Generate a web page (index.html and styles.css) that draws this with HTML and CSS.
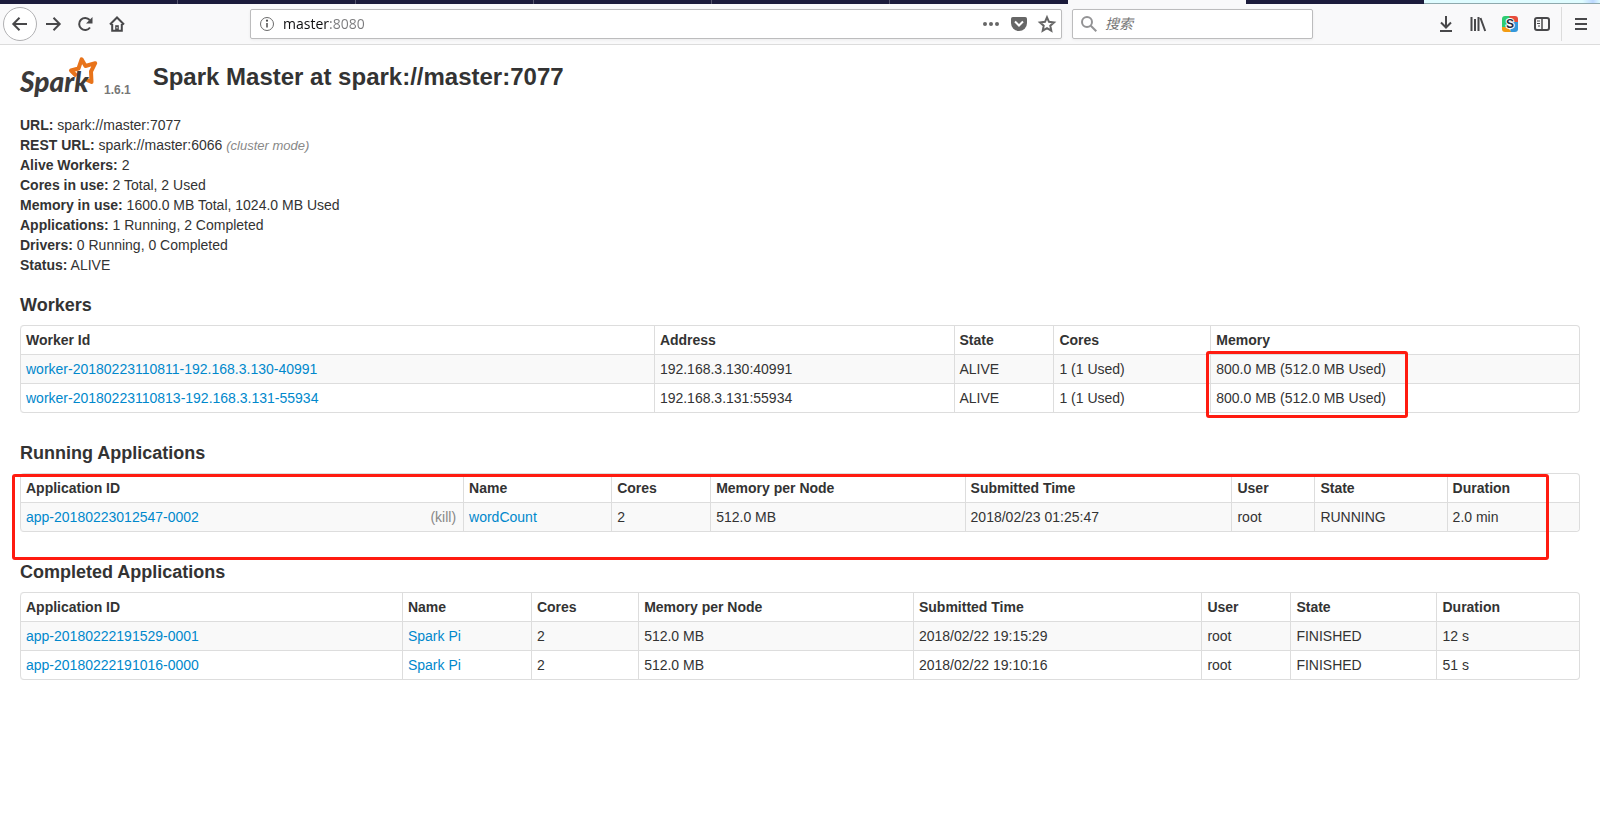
FILE: index.html
```html
<!DOCTYPE html>
<html lang="en">
<head>
<meta charset="utf-8">
<title>Spark Master at spark://master:7077</title>
<link rel="stylesheet" href="styles.css">
</head>
<body>
<div class="tabstrip">
  <span class="tab"></span><span class="tab"></span><span class="tab"></span><span class="tab"></span><span class="tab"></span><span class="tab tab-last"></span><span class="tab tab-active"></span><span class="tab tab-last"></span><span class="tab-space"></span>
</div>
<nav class="toolbar" aria-label="Browser toolbar">
  <div class="nav-buttons">
    <button class="back" type="button" aria-label="Back"><svg class="icon" viewBox="0 0 16 16"><path d="M15 8H2M7.500 1.800 1.300 8l6.200 6.200"/></svg></button>
    <button class="tool" type="button" aria-label="Forward"><svg class="icon" viewBox="0 0 16 16"><path d="M1 8h13M8.500 1.800 14.700 8l-6.200 6.200"/></svg></button>
    <button class="tool" type="button" aria-label="Reload"><svg class="icon" viewBox="0 0 16 16"><path d="M13 11.500A6 6 0 1 1 12.700 4"/><path class="solid" d="M15.500 1v6.500H9z"/></svg></button>
    <button class="tool" type="button" aria-label="Home"><svg class="icon" viewBox="0 0 16 16"><path d="M1 8.500 8 1.500l7 7M3.200 8v6.800h9.600V8"/><path class="solid" d="M6.200 15V9.200h3.600V15z"/><path d="M8 11v1.500" stroke="#f9f9fa" stroke-width="1"/></svg></button>
  </div>
  <div class="field url-field">
    <svg class="icon thin" viewBox="0 0 16 16"><circle cx="8" cy="8" r="6.500"/><path d="M8 7v4.500" stroke-width="1.800"/><circle class="solid" cx="8" cy="4.700" r="1.100"/></svg>
    <input class="url" type="text" value="master:8080" aria-label="Address">
    <button class="inner" type="button" aria-label="Page actions"><svg class="icon grey" viewBox="0 0 16 16"><circle class="dot" cx="2" cy="8" r="2"/><circle class="dot" cx="8" cy="8" r="2"/><circle class="dot" cx="14" cy="8" r="2"/></svg></button>
    <button class="inner" type="button" aria-label="Save to Pocket"><svg class="icon grey" viewBox="0 0 16 16"><path class="dot" d="M1.800 1h12.400Q16 1 16 2.800V7A8 8 0 0 1 0 7V2.800Q0 1 1.800 1z"/><path d="m4 5.500 4 4 4-4" stroke="#fff"/></svg></button>
    <button class="inner" type="button" aria-label="Bookmark"><svg class="icon grey" viewBox="0 0 16 16"><path d="m8 1.300 2 4.500 5 .6-3.700 3.300 1 5L8 12.200l-4.300 2.500 1-5L1 6.400l5-.6z"/></svg></button>
  </div>
  <div class="field search-field">
    <svg class="icon glass" viewBox="0 0 16 16"><circle cx="6" cy="6" r="5"/><path d="m9.800 9.800 5.500 5.500"/></svg>
    <input class="search" type="text" placeholder="搜索" aria-label="搜索">
  </div>
  <div class="tools">
    <button class="tool" type="button" aria-label="Downloads"><svg class="icon" viewBox="0 0 16 16"><path d="M8 0v11M3 6.500l5 5 5-5M2 15h12"/></svg></button>
    <button class="tool" type="button" aria-label="Library"><svg class="icon" viewBox="0 0 16 16"><path d="M1.500 1v14M5 3v12M8.500 1v14M10.500 2l4.700 13" stroke-width="2"/></svg></button>
    <button class="tool" type="button" aria-label="Sogou"><svg class="icon" viewBox="0 0 16 16"><defs><clipPath id="tile"><rect width="16" height="16" rx="3"/></clipPath></defs><g clip-path="url(#tile)" stroke="none"><path fill="#2ecc71" d="M0 0h9v7l-5 4H0z"/><path fill="#e74c3c" d="M7 0h9v6h-6z"/><path fill="#3498db" d="M10 6h6v10H8z"/><path fill="#f39c12" d="M0 11h6l3 5H0z"/></g><text class="badge-letter" x="8" y="12" text-anchor="middle">S</text></svg></button>
    <button class="tool" type="button" aria-label="Sidebars"><svg class="icon" viewBox="0 0 16 16"><rect x="1" y="2" width="14" height="12" rx="2"/><path d="M8 2v12" stroke-width="1.500"/><path d="M3 5h3M3 7.500h3M4 10h2" stroke-width="1"/></svg></button>
    <span class="divider"></span>
    <button class="tool" type="button" aria-label="Menu"><svg class="icon" viewBox="0 0 16 16"><path d="M2 3h12M2 8h12M2 13h12"/></svg></button>
  </div>
</nav>

<main class="page">
  <header class="masthead">
    <a class="brand" href="#" aria-label="Spark">
      <svg class="logo" viewBox="0 0 78 42"><path class="star" d="M56.500 18 51 12.500l7.500-2 3.100-9.200L65.500 8l9.700-2.800L71 13.500 71.500 24l-5.500-2.500"/><text class="wordmark" x="0" y="34">Spark</text></svg>
    </a>
    <span class="version">1.6.1</span>
    <h1 class="title">Spark Master at spark://master:7077</h1>
  </header>

  <ul class="summary">
    <li><strong>URL:</strong> spark://master:7077</li>
    <li><strong>REST URL:</strong> spark://master:6066 <span class="note">(cluster mode)</span></li>
    <li><strong>Alive Workers:</strong> 2</li>
    <li><strong>Cores in use:</strong> 2 Total, 2 Used</li>
    <li><strong>Memory in use:</strong> 1600.0 MB Total, 1024.0 MB Used</li>
    <li><strong>Applications:</strong> 1 Running, 2 Completed</li>
    <li><strong>Drivers:</strong> 0 Running, 0 Completed</li>
    <li><strong>Status:</strong> ALIVE</li>
  </ul>

  <h2 class="heading">Workers</h2>
  <div class="table-box">
    <table class="grid workers">
      <colgroup><col><col><col><col><col></colgroup>
      <thead><tr><th>Worker Id</th><th>Address</th><th>State</th><th>Cores</th><th>Memory</th></tr></thead>
      <tbody>
        <tr><td><a href="#">worker-20180223110811-192.168.3.130-40991</a></td><td>192.168.3.130:40991</td><td>ALIVE</td><td>1 (1 Used)</td><td>800.0 MB (512.0 MB Used)</td></tr>
        <tr><td><a href="#">worker-20180223110813-192.168.3.131-55934</a></td><td>192.168.3.131:55934</td><td>ALIVE</td><td>1 (1 Used)</td><td>800.0 MB (512.0 MB Used)</td></tr>
      </tbody>
    </table>
    <div class="mark mark-memory"></div>
  </div>

  <h2 class="heading">Running Applications</h2>
  <div class="table-box">
    <table class="grid running">
      <colgroup><col><col><col><col><col><col><col><col></colgroup>
      <thead><tr><th>Application ID</th><th>Name</th><th>Cores</th><th>Memory per Node</th><th>Submitted Time</th><th>User</th><th>State</th><th>Duration</th></tr></thead>
      <tbody>
        <tr><td><div class="app-cell"><a href="#">app-20180223012547-0002</a><a class="kill" href="#">(kill)</a></div></td><td><a href="#">wordCount</a></td><td>2</td><td>512.0 MB</td><td>2018/02/23 01:25:47</td><td>root</td><td>RUNNING</td><td>2.0 min</td></tr>
      </tbody>
    </table>
    <div class="mark mark-running"></div>
  </div>

  <h2 class="heading">Completed Applications</h2>
  <div class="table-box">
    <table class="grid completed">
      <colgroup><col><col><col><col><col><col><col><col></colgroup>
      <thead><tr><th>Application ID</th><th>Name</th><th>Cores</th><th>Memory per Node</th><th>Submitted Time</th><th>User</th><th>State</th><th>Duration</th></tr></thead>
      <tbody>
        <tr><td><a href="#">app-20180222191529-0001</a></td><td><a href="#">Spark Pi</a></td><td>2</td><td>512.0 MB</td><td>2018/02/22 19:15:29</td><td>root</td><td>FINISHED</td><td>12 s</td></tr>
        <tr><td><a href="#">app-20180222191016-0000</a></td><td><a href="#">Spark Pi</a></td><td>2</td><td>512.0 MB</td><td>2018/02/22 19:10:16</td><td>root</td><td>FINISHED</td><td>51 s</td></tr>
      </tbody>
    </table>
  </div>
</main>
</body>
</html>
```
FILE: styles.css
```css
* { box-sizing: border-box; }

body {
  margin: 0;
  background: #fff;
  color: #333;
  font: 14px/20px "Liberation Sans", Arial, sans-serif;
}

a { color: #08c; text-decoration: none; }

button {
  display: flex;
  align-items: center;
  justify-content: center;
  padding: 0;
  border: 0;
  background: none;
}

/* Browser chrome */
.tabstrip { display: flex; height: 4px; background: #1c1c3c; }
.tab { flex: 0 0 178px; border-right: 1px solid #55556c; }
.tab-last { border-right: 0; }
.tab-active { border-right: 0; background: #f9f9fa; }
.tab-space {
  flex: 1;
  border-bottom: 1px solid #8fa9ad;
  background: linear-gradient(90deg, #dffcff 90%, #bcd8ff 96%, #dffcff);
}

.toolbar {
  display: flex;
  align-items: center;
  height: 41px;
  padding: 0 3px;
  border-bottom: 1px solid #dcdcdc;
  background: #f9f9fa;
}

.nav-buttons { display: flex; flex: 0 0 247px; align-items: center; }
.back {
  width: 34px;
  height: 34px;
  border: 1px solid #b1b1b3;
  border-radius: 50%;
  background: #fff;
}
.tool { width: 32px; height: 32px; }

.icon {
  flex: none;
  width: 16px;
  height: 16px;
  overflow: visible;
  fill: none;
  stroke: #48484a;
  stroke-width: 2;
}
.solid { fill: #48484a; stroke: none; }
.thin { stroke: #6b6b6b; stroke-width: 1; }
.grey { stroke: #666; stroke-width: 2; }
.dot { fill: #666; stroke: none; }
.glass { stroke: #939395; }
.badge-letter {
  fill: #222a44;
  stroke: #fff;
  stroke-width: 2;
  paint-order: stroke;
  font: bold 12px "Liberation Sans", Arial, sans-serif;
}

.field {
  display: flex;
  align-items: center;
  height: 30px;
  border: 1px solid #bcbcbd;
  border-radius: 2px;
  background: #fff;
  box-shadow: 0 1px 3px rgba(0, 0, 0, 0.06);
}
.url-field { flex: 1; margin-right: 10px; padding-left: 8px; }
.search-field { flex: 0 0 241px; padding-left: 8px; }
.field input {
  flex: 1;
  min-width: 0;
  height: 24px;
  margin-left: 8px;
  padding: 0;
  border: 0;
  outline: 0;
  background: none;
  font: 14px/24px "Open Sans", "Noto Sans CJK SC", sans-serif;
}
.field .url {
  background: linear-gradient(90deg, #0c0c0d 46px, #7a7a7c 46px);
  -webkit-background-clip: text;
  background-clip: text;
  color: transparent;
}
.search::placeholder {
  color: #757575;
  font-style: italic;
  opacity: 1;
}
.inner { width: 28px; height: 28px; }

.tools { display: flex; flex: 0 0 167px; align-items: center; margin-left: 117px; }
.divider { flex: none; width: 1px; height: 34px; margin: 0 3px; background: #dcdcdc; }

/* Spark master page */
.page { padding: 10px 20px; }

.masthead { display: flex; align-items: flex-end; height: 45px; margin-bottom: 15px; }
.logo { display: block; width: 78px; height: 42px; overflow: visible; }
.star { fill: none; stroke: #e8731a; stroke-width: 4; stroke-linejoin: round; }
.wordmark { fill: #3c3a3a; font: italic 900 28px Lato, sans-serif; }
.version { margin: 0 22px 0 6px; color: #777; font-size: 12px; font-weight: bold; }
.title { align-self: flex-start; margin: 0; font-size: 24px; line-height: 44px; }

.summary { margin: 0; padding: 0; list-style: none; }
.note { color: #888; font-size: 13px; font-style: italic; line-height: 1; }

.heading { margin: 20px 0 10px; font-size: 18px; line-height: 20px; }
.table-box { position: relative; margin-bottom: 30px; }
.table-box + .heading { margin-top: 0; }

.grid {
  width: 100%;
  table-layout: fixed;
  border: 1px solid #ddd;
  border-left: 0;
  border-radius: 4px;
  border-spacing: 0;
}
.grid th,
.grid td {
  padding: 4px 5px;
  border-left: 1px solid #ddd;
  text-align: left;
  vertical-align: top;
}
.grid td { border-top: 1px solid #ddd; }
.grid tbody tr:nth-child(odd) td { background: #f9f9f9; }
.grid th:first-child { border-top-left-radius: 4px; }
.grid tr:last-child td:first-child { border-bottom-left-radius: 4px; }
.grid tr:last-child td:last-child { border-bottom-right-radius: 4px; }

.workers col:nth-child(1) { width: 40.66%; }
.workers col:nth-child(2) { width: 19.22%; }
.workers col:nth-child(3) { width: 6.41%; }
.workers col:nth-child(4) { width: 10.06%; }

.running col:nth-child(1) { width: 28.42%; }
.running col:nth-child(2) { width: 9.5%; }
.running col:nth-child(3) { width: 6.35%; }
.running col:nth-child(4) { width: 16.32%; }
.running col:nth-child(5) { width: 17.12%; }
.running col:nth-child(6) { width: 5.32%; }
.running col:nth-child(7) { width: 8.48%; }

.completed col:nth-child(1) { width: 24.5%; }
.completed col:nth-child(2) { width: 8.27%; }
.completed col:nth-child(3) { width: 6.88%; }
.completed col:nth-child(4) { width: 17.63%; }
.completed col:nth-child(5) { width: 18.5%; }
.completed col:nth-child(6) { width: 5.71%; }
.completed col:nth-child(7) { width: 9.37%; }

.app-cell { display: flex; justify-content: space-between; }
.kill { margin-right: 2px; color: #888; }

/* Red highlight frames laid over the tables */
.mark {
  position: absolute;
  border: 3px solid #ff1b10;
  border-radius: 3px;
  pointer-events: none;
}
.mark-memory { top: 26px; left: 76%; width: 202px; height: 67px; }
.mark-running { top: 1px; right: 31px; left: -8px; height: 86px; }
```
